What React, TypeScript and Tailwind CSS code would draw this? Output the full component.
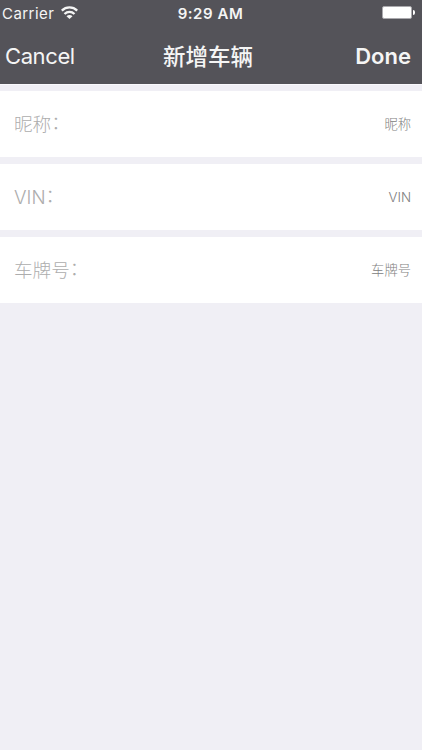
const rows = ["昵称", "VIN", "车牌号"];

export default function App() {
  return (
    <main className="flex h-[750px] w-[422px] flex-col overflow-hidden bg-[#f0eff5] font-[Inter,'Noto_Sans_CJK_SC',sans-serif]">
      <header className="h-[84px] bg-[#545359] text-[#f5f5f5]">
        <div className="grid h-[27px] grid-cols-3 items-center pl-[2px] pr-[7px] text-[15px] leading-none">
          <div className="flex items-center gap-[7px]">
            <span className="tracking-[0.45px]">Carrier</span>
            <svg width="17" height="13" viewBox="0 0 17 13" className="-mt-[2px]" fill="none" stroke="currentColor" strokeWidth="2.3">
              <path d="M.8 4.6C5.2.4 11.8.4 16.2 4.6M3.5 8c2.9-2.8 7.1-2.8 10 0" />
              <path d="M5.5 10.2c1.6-1.5 4.4-1.5 6 0L8.5 13z" fill="currentColor" stroke="none" />
            </svg>
          </div>
          <span className="pl-[4px] text-center font-semibold tracking-[0.55px]">9:29 AM</span>
          <div className="-mt-[2px] flex items-center justify-end gap-px">
            <span className="h-[13px] w-[30px] rounded-[2px] border border-[#aaa9ad] bg-white" />
            <span className="h-[5px] w-[2px] rounded-r bg-white" />
          </div>
        </div>
        <nav className="grid h-[57px] grid-cols-3 items-center pl-[5px] pr-[11px] text-[22px] leading-none">
          <button className="text-left tracking-[-0.4px]">Cancel</button>
          <h1 className="pt-[3px] text-center text-[22.5px] font-medium">新增车辆</h1>
          <button className="text-right font-semibold">Done</button>
        </nav>
      </header>
      <section className="flex flex-col gap-[7px] border-t border-[#faf9fd] pt-[6px]">
        {rows.map((name) => (
          <label key={name} className="flex h-[66px] items-center justify-between bg-white pl-[14px] pr-[11px]">
            <span className="flex items-center pt-[2px] text-[18.6px] font-light text-[#adadad]">
              <span>{name}</span>
              <span className="pb-[4px]">：</span>
            </span>
            <span className="pt-[2px] text-[13.3px] font-light text-[#808080]">{name}</span>
          </label>
        ))}
      </section>
    </main>
  );
}
